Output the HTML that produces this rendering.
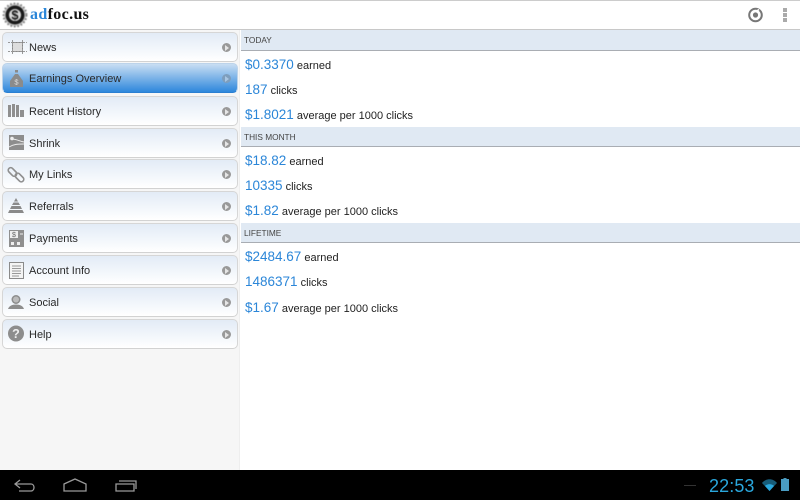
<!DOCTYPE html>
<html><head><meta charset="utf-8">
<style>
*{margin:0;padding:0;box-sizing:border-box}
html,body{width:800px;height:500px;overflow:hidden;background:#fff;font-family:"Liberation Sans",sans-serif}
.abs{position:absolute}
#top{left:0;top:0;width:800px;height:30px;background:#fff;border-top:1px solid #ccc;border-bottom:1px solid #c8c8c8}
#logo{left:30px;top:6px;font:bold 16px/18px "Liberation Serif",serif;color:#111;letter-spacing:.35px}
#logo b{color:#2b86d8}
#side{left:0;top:30px;width:240px;height:440px;background:#f6f6f6;border-right:1px solid #eee}
.it{position:absolute;left:2px;width:236px;height:30px;border-radius:5px;border:1px solid #d6d6d6;border-bottom:1.500px solid #d2d2d2;background:linear-gradient(#e2ebf6,#fff);font-size:11px;line-height:30px;color:#2a2a2a;padding-left:26px}
.it.on{background:linear-gradient(#c9def3,#2e87dc);border-color:#bcd3ea;border-bottom-color:#2a7fd2}
.it .ar{position:absolute;left:219px;top:10px;width:9px;height:9px;border-radius:50%;background:#999}
.it .ar:after{content:"";position:absolute;left:3px;top:1.500px;border-left:4.500px solid #e6e6e6;border-top:3px solid transparent;border-bottom:3px solid transparent}
.it.on .ar{background:#7e9ebd}
.it.on .ar:after{border-left-color:#a9c6e2}
.it svg{position:absolute;left:3px;top:2px;filter:blur(.35px)}
.hd{position:absolute;left:241px;width:559px;height:20px;background:#e0e9f3;border-bottom:1px solid #a9adb3;font-size:8.300px;line-height:20px;color:#444;padding-left:3px}
.r{position:absolute;left:245px;font-size:11px;line-height:18px;color:#222;white-space:nowrap}
.r b{font-weight:normal;font-size:13.500px;color:#2b86d8}
#bar{left:0;top:470px;width:800px;height:30px;background:#000}
#time{left:709px;top:476px;font-size:18px;line-height:20px;color:#2aa7dc;letter-spacing:.1px}
</style></head><body>
<div id="top" class="abs"></div>
<svg class="abs" style="left:2px;top:2px;filter:blur(.4px)" width="26" height="26" viewBox="0 0 26 26">
<circle cx="13" cy="13" r="11.500" fill="#999" opacity=".5"/>
<circle cx="13" cy="13" r="11.500" fill="none" stroke="#666" stroke-width="2" stroke-dasharray="1.500 2" opacity=".8"/>
<circle cx="13" cy="13" r="9.500" fill="#1a1a1a"/>
<circle cx="13" cy="13" r="6" fill="#d8d8d8"/>
<text x="13" y="17.500" font-family="Liberation Sans" font-weight="bold" font-size="12.500" text-anchor="middle" fill="#111">$</text>
</svg>
<div id="logo" class="abs"><b>ad</b>foc.us</div>
<svg class="abs" style="left:746px;top:6px;filter:blur(.3px)" width="18" height="18" viewBox="0 0 18 18">
<circle cx="9.500" cy="9" r="6.300" fill="none" stroke="#777" stroke-width="2"/>
<circle cx="9.500" cy="9" r="2.600" fill="#777"/>
<path d="M10 5.500L13 3.500" stroke="#fff" stroke-width="1.600"/>
</svg>
<div class="abs" style="left:783px;top:8px;width:4px;height:4px;background:#aaa"></div>
<div class="abs" style="left:783px;top:13px;width:4px;height:4px;background:#aaa"></div>
<div class="abs" style="left:783px;top:18px;width:4px;height:4px;background:#aaa"></div>

<div id="side" class="abs"></div>
<div class="it" style="top:32px">News<svg width="22" height="24" viewBox="0 0 22 24"><path d="M6.500 7.500h10v9h-10z" fill="#ddd" stroke="#888"/><path d="M2 7.500h19M2 16.500h19M6.500 5v14M16.500 5v14" stroke="#999" stroke-dasharray="2 1" fill="none"/></svg><i class="ar"></i></div>
<div class="it on" style="top:63px">Earnings Overview<svg width="22" height="24" viewBox="0 0 22 24"><path d="M9 4h3v2.500h-3z" fill="#8a8a8a"/><path d="M9 8h3l5 7v6H4v-6z" fill="#8b8b8b"/><text x="10.500" y="18.500" font-size="7.500" text-anchor="middle" fill="#ddd">$</text></svg><i class="ar"></i></div>
<div class="it" style="top:96px">Recent History<svg width="22" height="24" viewBox="0 0 22 24"><path d="M2 6h3v12H2zM6 5h3v13H6zM10 6h3v12h-3zM14 11h4v7h-4z" fill="#8f8f8f"/></svg><i class="ar"></i></div>
<div class="it" style="top:128px">Shrink<svg width="22" height="24" viewBox="0 0 22 24"><rect x="3" y="4" width="15" height="15" fill="#8d8d8d"/><circle cx="6" cy="7.500" r="1.800" fill="#eee"/><path d="M6 8c4 0 7 2 12 3M3 16c5-3 9-3 15-3" stroke="#eee" fill="none"/></svg><i class="ar"></i></div>
<div class="it" style="top:159px">My Links<svg width="22" height="24" viewBox="0 0 22 24" fill="none" stroke="#8f8f8f" stroke-width="1.600"><rect x="1.500" y="7.500" width="10" height="5" rx="2.500" transform="rotate(45 6.500 10)"/><rect x="8.500" y="13" width="10" height="5" rx="2.500" transform="rotate(45 13.500 15.500)"/></svg><i class="ar"></i></div>
<div class="it" style="top:191px">Referrals<svg width="22" height="24" viewBox="0 0 22 24"><path d="M10 4l2 3.500H8zM7.500 8.500h5l1.500 2.500H6zM5.500 12h9l1.500 3H4zM3.500 16h13l1.500 3H2z" fill="#8a8a8a"/></svg><i class="ar"></i></div>
<div class="it" style="top:223px">Payments<svg width="22" height="24" viewBox="0 0 22 24"><rect x="3" y="4" width="15" height="17" fill="#8f8f8f"/><rect x="4" y="5" width="8" height="7" fill="#eee"/><text x="8" y="11" font-size="7" text-anchor="middle" fill="#666">$</text><path d="M14 8h3" stroke="#eee"/><rect x="5" y="16" width="3" height="3" fill="#eee"/><rect x="11" y="16" width="3" height="3" fill="#eee"/></svg><i class="ar"></i></div>
<div class="it" style="top:255px">Account Info<svg width="22" height="24" viewBox="0 0 22 24"><rect x="3.500" y="4.500" width="14" height="16" fill="#f4f4f4" stroke="#8a8a8a"/><path d="M6 8h9M6 10.500h9M6 13h9M6 15.500h9M6 18h7" stroke="#999"/></svg><i class="ar"></i></div>
<div class="it" style="top:287px">Social<svg width="22" height="24" viewBox="0 0 22 24"><circle cx="10" cy="9.500" r="4.500" fill="#8d8d8d"/><circle cx="10" cy="9.500" r="3" fill="#bbb"/><path d="M2 19c1-3 4-4.500 8-4.500s7 1.500 8 4.500z" fill="#8d8d8d"/></svg><i class="ar"></i></div>
<div class="it" style="top:319px">Help<svg width="22" height="24" viewBox="0 0 22 24"><circle cx="10" cy="11.500" r="8" fill="#8d8d8d"/><text x="10" y="16" font-size="12.500" font-weight="bold" text-anchor="middle" fill="#eee">?</text></svg><i class="ar"></i></div>

<div class="hd" style="top:30px;height:21px;line-height:21px">TODAY</div>
<div class="r" style="top:56px"><b>$0.3370</b> earned</div>
<div class="r" style="top:81px"><b>187</b> clicks</div>
<div class="r" style="top:106px"><b>$1.8021</b> average per 1000 clicks</div>
<div class="hd" style="top:127px">THIS MONTH</div>
<div class="r" style="top:152px"><b>$18.82</b> earned</div>
<div class="r" style="top:177px"><b>10335</b> clicks</div>
<div class="r" style="top:202px"><b>$1.82</b> average per 1000 clicks</div>
<div class="hd" style="top:223px">LIFETIME</div>
<div class="r" style="top:248px"><b>$2484.67</b> earned</div>
<div class="r" style="top:273px"><b>1486371</b> clicks</div>
<div class="r" style="top:299px"><b>$1.67</b> average per 1000 clicks</div>

<div id="bar" class="abs"></div>
<svg class="abs" style="left:0;top:470px" width="160" height="30" viewBox="0 0 160 30" fill="none" stroke="#9a9a9a" stroke-width="1.300">
<path d="M15 14h16c4 0 4 7 0 7H19M20 10l-5 4 5 4"/>
<path d="M64 14l11-5 11 5v7H64z"/>
<path d="M116 14h18v7h-18zM119 11h17v8"/>
</svg>
<div class="abs" style="left:684px;top:485px;width:12px;height:1px;background:#333"></div>
<div id="time" class="abs">22:53</div>
<svg class="abs" style="left:760px;top:477px" width="36" height="18" viewBox="0 0 36 18">
<path d="M2 6c4-5 11-5 15 0l-7.500 8z" fill="#2aa7dc" opacity=".55"/>
<path d="M5 9c2.500-2.500 6.500-2.500 9 0l-4.500 5z" fill="#2aa7dc"/>
<rect x="23.500" y="1" width="3" height="2" fill="#4a96b8"/>
<rect x="21" y="2" width="8" height="12" fill="#4a9cc2"/>
</svg>
</body></html>
